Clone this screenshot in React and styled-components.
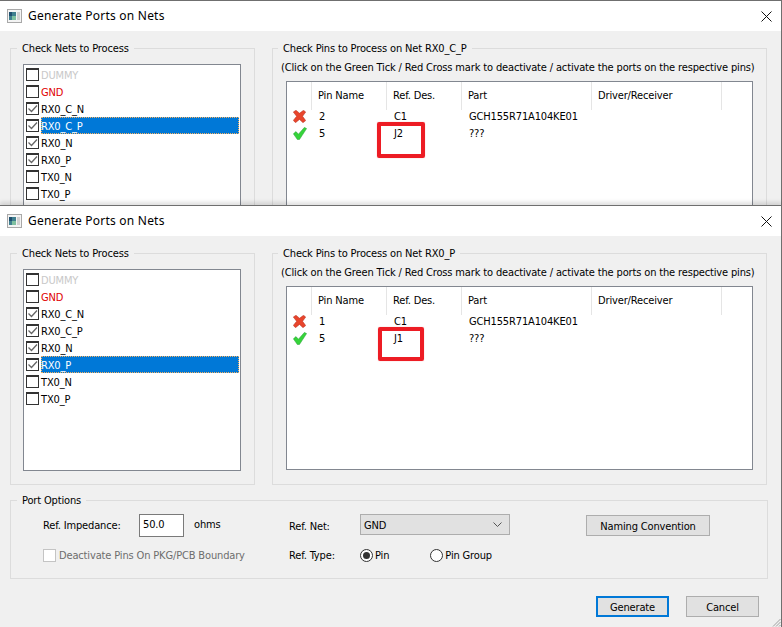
import React from 'react';
import styled, { createGlobalStyle } from 'styled-components';

const GlobalStyle = createGlobalStyle`
    html, body {
        margin: 0;
        padding: 0;
        background: #f0f0f0;
    }
    * {
        box-sizing: border-box;
    }
`;

const Page = styled.div`
    position: relative;
    display: flex;
    flex-direction: column;
    width: 782px;
    height: 627px;
    overflow: hidden;
    font-family: "DejaVu Sans Condensed", "DejaVu Sans", sans-serif;
    font-stretch: condensed;
    font-size: 11px;
    letter-spacing: -0.15px;
    color: #000;
`;

const Window = styled.section`
    position: relative;
    flex: none;
    height: ${(p) => p.$height}px;
    overflow: hidden;
    background: #f0f0f0;
    border-top: 1px solid #6f6f6f;
    border-right: 1px solid #6f6f6f;
    box-shadow: 0 -3px 4px rgba(0, 0, 0, 0.12);
`;

const TitleBar = styled.header`
    display: flex;
    align-items: center;
    height: 30px;
    padding: 0 9px 0 7px;
    background: #fff;
`;

const Title = styled.h1`
    flex: 1;
    height: 16px;
    margin: 0 0 0 6px;
    font-family: "Noto Sans", sans-serif;
    font-stretch: normal;
    font-size: 12px;
    font-weight: 400;
    line-height: 16px;
    letter-spacing: 0.22px;
`;

const Body = styled.div`
    padding: 10px 13px 0 10px;
`;

const Panels = styled.div`
    display: grid;
    grid-template-columns: 245px 495px;
    gap: 17px;
    height: 239px;
`;

const Group = styled.fieldset`
    min-width: 0;
    margin: 0;
    padding: 0;
    border: 1px solid #dcdcdc;
`;

const GroupBody = styled.div`
    padding: ${(p) => p.$padding};
`;

const Legend = styled.legend`
    height: 14px;
    margin-left: ${(p) => p.$left || 6}px;
    padding: 0 5px;
    font-size: 11px;
    line-height: 16px;
`;

const NetList = styled.div`
    width: 218px;
    height: 202px;
    padding-top: 1px;
    background: #fff;
    border: 1px solid #828790;
`;

const NetRow = styled.div`
    display: flex;
    align-items: center;
    height: 17px;
    padding-left: 2px;
`;

const Box = styled.span`
    display: block;
    flex: none;
    width: 13px;
    height: 13px;
    background: ${(p) => (p.$disabled ? '#fff' : 'transparent')};
    border: 1px solid ${(p) => (p.$disabled ? '#c4c4c4' : '#333')};
    border-top-width: ${(p) => (p.$disabled ? 1 : 2)}px;
`;

const Tick = styled.svg`
    display: block;
    width: 11px;
    height: 10px;
`;

const NetName = styled.span`
    flex: 1;
    height: 17px;
    margin-left: 2px;
    margin-right: 1px;
    line-height: 19px;
    color: ${(p) => (p.$selected ? '#fff' : p.$color)};
    background: ${(p) => (p.$selected ? '#0078d7' : 'transparent')};
    outline: ${(p) => (p.$selected ? '1px dotted #f5b060' : 'none')};
    outline-offset: -1px;
`;

const Hint = styled.p`
    height: 14px;
    margin: 0 0 7px -5px;
    line-height: 16px;
    white-space: nowrap;
`;

const PinTable = styled.div`
    width: 467px;
    height: 184px;
    background: #fff;
    border: 1px solid #828790;
`;

const PinRow = styled.div`
    display: grid;
    grid-template-columns: 25px 75px 75px 130px 130px;
    height: ${(p) => (p.$head ? 26 : 17)}px;
    line-height: ${(p) => (p.$head ? 28 : 17)}px;
`;

const HeadCell = styled.div`
    padding-left: 6px;
    border-right: 1px solid #e5e5e5;
`;

const Cell = styled.div`
    display: flex;
    align-items: center;
    padding-left: ${(p) => (p.$icon ? 6 : 7)}px;
    white-space: nowrap;
`;

const Options = styled(Group)`
    width: 758px;
    height: 86px;
    margin-top: 8px;
`;

const OptionsBody = styled(GroupBody)`
    display: flex;
`;

const Column = styled.div`
    display: flex;
    flex-direction: column;
    flex: none;
    width: ${(p) => p.$width}px;
`;

const FieldRow = styled.div`
    display: flex;
    align-items: center;
    height: ${(p) => p.$height}px;
    margin-top: ${(p) => p.$gap || 0}px;
`;

const Label = styled.span`
    flex: none;
    width: ${(p) => p.$width}px;
    padding-top: ${(p) => p.$drop || 0}px;
`;

const NumberInput = styled.div`
    width: 45px;
    height: 23px;
    padding-left: 3px;
    line-height: 19px;
    background: #fff;
    border: 1px solid #7a7a7a;
`;

const Unit = styled.span`
    margin: -2px 0 0 10px;
`;

const DisabledText = styled.span`
    margin-left: 3px;
    color: #6d6d6d;
`;

const Select = styled.div`
    display: flex;
    align-items: center;
    justify-content: space-between;
    width: 150px;
    height: 21px;
    padding: 1px 7px 0 3px;
    background: #e1e1e1;
    border: 1px solid #adadad;
`;

const Radio = styled.span`
    display: flex;
    align-items: center;
    justify-content: center;
    flex: none;
    width: 13px;
    height: 13px;
    margin-left: ${(p) => p.$gap || 0}px;
    background: #fff;
    border: 1px solid #333;
    border-radius: 50%;
    &::after {
        content: '';
        display: ${(p) => (p.$checked ? 'block' : 'none')};
        width: 7px;
        height: 7px;
        background: #333;
        border-radius: 50%;
    }
`;

const RadioText = styled.span`
    margin-left: 2px;
`;

const Button = styled.button`
    width: ${(p) => p.$width}px;
    height: 21px;
    margin: ${(p) => p.$margin || 0};
    padding: 2px 0 0;
    font: inherit;
    letter-spacing: inherit;
    color: #000;
    background: #e1e1e1;
    border: ${(p) => (p.$primary ? '2px solid #0078d7' : '1px solid #adadad')};
`;

const Footer = styled.div`
    display: flex;
    justify-content: flex-end;
    gap: 17px;
    margin-top: 17px;
    margin-right: 9px;
`;

// 창 위에 덧그린 빨간 표시
const Marker = styled.div`
    position: absolute;
    left: ${(p) => p.$left}px;
    top: ${(p) => p.$top}px;
    width: ${(p) => p.$width}px;
    height: ${(p) => p.$height}px;
    border: 4px solid #ed1c24;
    border-radius: 2px;
    box-shadow: 0 0 1px rgba(237, 28, 36, 0.5);
`;

const Grip = styled.svg`
    position: absolute;
    right: 0;
    bottom: 0;
    width: 10px;
    height: 10px;
`;

const AppIcon = () => (
    <svg width="15" height="14" viewBox="0 0 15 14">
        <rect x="0.5" y="0.5" width="14" height="13" fill="#f4f4f4" stroke="#a8a8a8" />
        <rect x="2" y="3" width="7" height="8" fill="#3f7f8f" />
        <rect x="2" y="3" width="3" height="4" fill="#1f4f6f" />
        <rect x="5" y="7" width="4" height="4" fill="#7fc0a0" />
        <rect x="10" y="3" width="3" height="8" fill="#d0d0d0" />
    </svg>
);

const CloseIcon = () => (
    <svg width="11" height="11" viewBox="0 0 11 11">
        <path d="M0.5 0.5 L10.5 10.5 M10.5 0.5 L0.5 10.5" stroke="#111" strokeWidth="1" fill="none" />
    </svg>
);

const CrossMark = () => (
    <svg width="13" height="13" viewBox="0 0 13 13">
        <path
            d="M0.3 2 L3 0.3 L6.5 3.2 L10.5 0.3 L12.7 2 L9.6 6.3 L12.7 10.6 L10 12.7 L6.5 9.4 L2.5 12.7 L0.3 10.4 L3.6 6.3 Z"
            fill="#e8452c"
            stroke="#b33020"
            strokeWidth="0.5"
        />
    </svg>
);

const TickMark = () => (
    <svg width="14" height="13" viewBox="0 0 14 13">
        <path
            d="M0.4 6.8 L3 4.6 L5.4 7.2 L11.4 0.4 L13.6 1.6 L6.4 12.6 L4.4 12.6 Z"
            fill="#35d43a"
            stroke="#1c9a2c"
            strokeWidth="0.5"
        />
    </svg>
);

const Check = ({ checked, disabled }) => (
    <Box $disabled={disabled}>
        {checked && (
            <Tick viewBox="0 0 11 10">
                <path d="M1.5 4.5 L4.5 7.5 L10 1.5" stroke="#666" strokeWidth="1.3" fill="none" />
            </Tick>
        )}
    </Box>
);

const NETS = [
    { name: 'DUMMY', color: '#c8c8c8' },
    { name: 'GND', color: '#e00000' },
    { name: 'RX0_C_N', color: '#000', checked: true },
    { name: 'RX0_C_P', color: '#000', checked: true },
    { name: 'RX0_N', color: '#000', checked: true },
    { name: 'RX0_P', color: '#000', checked: true },
    { name: 'TX0_N', color: '#000' },
    { name: 'TX0_P', color: '#000' },
];

const COLUMNS = ['', 'Pin Name', 'Ref. Des.', 'Part', 'Driver/Receiver'];

const GeneratorWindow = ({ height, net, firstPin, refDes, children }) => (
    <Window $height={height}>
        <TitleBar>
            <AppIcon />
            <Title>Generate Ports on Nets</Title>
            <CloseIcon />
        </TitleBar>
        <Body>
            <Panels>
                <Group>
                    <Legend>Check Nets to Process</Legend>
                    <GroupBody $padding="9px 0 0 12px">
                        <NetList>
                            {NETS.map((item) => (
                                <NetRow key={item.name}>
                                    <Check checked={item.checked} />
                                    <NetName $color={item.color} $selected={item.name === net}>
                                        {item.name}
                                    </NetName>
                                </NetRow>
                            ))}
                        </NetList>
                    </GroupBody>
                </Group>
                <Group>
                    <Legend $left={5}>Check Pins to Process on Net {net}</Legend>
                    <GroupBody $padding="5px 0 0 13px">
                        <Hint>
                            (Click on the Green Tick / Red Cross mark to deactivate / activate the ports on the respective pins)
                        </Hint>
                        <PinTable>
                            <PinRow $head>
                                {COLUMNS.map((col) => (
                                    <HeadCell key={col}>{col}</HeadCell>
                                ))}
                            </PinRow>
                            <PinRow>
                                <Cell $icon><CrossMark /></Cell>
                                <Cell>{firstPin}</Cell>
                                <Cell>C1</Cell>
                                <Cell>GCH155R71A104KE01</Cell>
                            </PinRow>
                            <PinRow>
                                <Cell $icon><TickMark /></Cell>
                                <Cell>5</Cell>
                                <Cell>{refDes}</Cell>
                                <Cell>???</Cell>
                            </PinRow>
                        </PinTable>
                    </GroupBody>
                </Group>
            </Panels>
            {children}
        </Body>
    </Window>
);

const App = () => (
    <Page>
        <GlobalStyle />
        <GeneratorWindow height={205} net="RX0_C_P" firstPin="2" refDes="J2">
            <Marker $left={377} $top={121} $width={48} $height={36} />
        </GeneratorWindow>
        <GeneratorWindow height={422} net="RX0_P" firstPin="1" refDes="J1">
            <Options>
                <Legend>Port Options</Legend>
                <OptionsBody $padding="7px 0 0 32px">
                    <Column $width={246}>
                        <FieldRow $height={23}>
                            <Label $width={96}>Ref. Impedance:</Label>
                            <NumberInput>50.0</NumberInput>
                            <Unit>ohms</Unit>
                        </FieldRow>
                        <FieldRow $height={14} $gap={11}>
                            <Check disabled />
                            <DisabledText>Deactivate Pins On PKG/PCB Boundary</DisabledText>
                        </FieldRow>
                    </Column>
                    <Column $width={297}>
                        <FieldRow $height={21}>
                            <Label $width={71} $drop={4}>Ref. Net:</Label>
                            <Select>
                                GND
                                <svg width="9" height="6" viewBox="0 0 9 6">
                                    <path d="M0.5 0.5 L4.5 4.5 L8.5 0.5" stroke="#555" fill="none" />
                                </svg>
                            </Select>
                        </FieldRow>
                        <FieldRow $height={14} $gap={13}>
                            <Label $width={71}>Ref. Type:</Label>
                            <Radio $checked />
                            <RadioText>Pin</RadioText>
                            <Radio $gap={41} />
                            <RadioText>Pin Group</RadioText>
                        </FieldRow>
                    </Column>
                    <Button $width={124} $margin="1px 0 0 0">Naming Convention</Button>
                </OptionsBody>
            </Options>
            <Footer>
                <Button $width={73} $primary>Generate</Button>
                <Button $width={73}>Cancel</Button>
            </Footer>
            <Marker $left={378} $top={121} $width={46} $height={34} />
            <Grip viewBox="0 0 10 10">
                <path d="M9.5 2 L2 9.5 M9.5 5 L5 9.5 M9.5 8 L8 9.5" stroke="#a0a0a0" fill="none" />
            </Grip>
        </GeneratorWindow>
    </Page>
);

export default App;
